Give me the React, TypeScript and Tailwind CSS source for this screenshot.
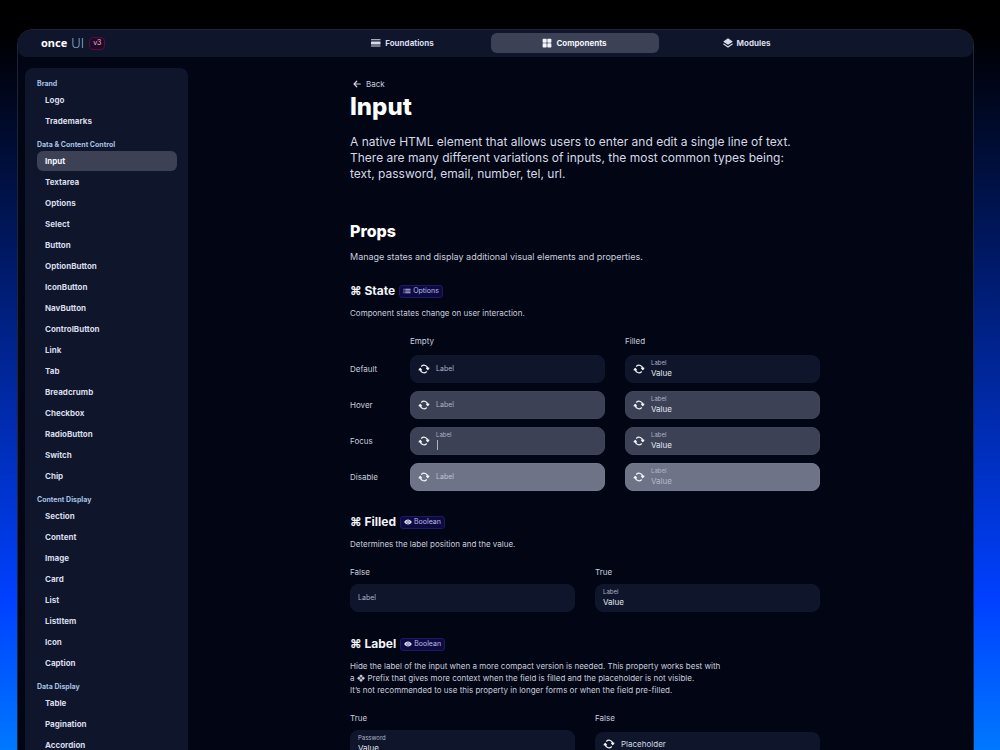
import React from "react";
import { IoEye, IoGrid } from "react-icons/io5";

const groups = [
    { title: "Brand", items: ["Logo", "Trademarks"] },
    {
        title: "Data & Content Control",
        items: [
            "Input", "Textarea", "Options", "Select", "Button", "OptionButton", "IconButton", "NavButton",
            "ControlButton", "Link", "Tab", "Breadcrumb", "Checkbox", "RadioButton", "Switch", "Chip",
        ],
    },
    { title: "Content Display", items: ["Section", "Content", "Image", "Card", "List", "ListItem", "Icon", "Caption"] },
    { title: "Data Display", items: ["Table", "Pagination", "Accordion"] },
];

const states = [
    { name: "Default", style: "bg-[#0f152a] border-[#10172d]", text: "" },
    { name: "Hover", style: "bg-[#3c4156] border-[#40455a]", text: "" },
    { name: "Focus", style: "bg-[#3c4156] border-[#40455a]", text: "" },
    { name: "Disable", style: "bg-[#6e7388] border-[#73788d]", text: "text-[#b4b8c8]" },
];

function RowsIcon() {
    return (
        <svg viewBox="0 0 20 16" className="h-2 w-2.5" fill="currentColor" aria-hidden="true">
            <rect x="0" y="0.5" width="19" height="2" rx="0.5" />
            <rect x="0" y="4.8" width="19" height="6.2" rx="0.5" />
            <rect x="0" y="13.2" width="19" height="2" rx="0.5" />
        </svg>
    );
}

function LayersIcon() {
    return (
        <svg viewBox="0 0 20 20" className="size-2.5" fill="currentColor" aria-hidden="true">
            <path d="M10 0.5 L18.6 6.4 Q19.6 7.1 18.6 7.8 L10.9 13 Q10 13.6 9.1 13 L1.4 7.8 Q0.4 7.1 1.4 6.4 Z" />
            <path d="M1.4 12 L10 18 L18.6 12" fill="none" stroke="currentColor" strokeWidth="2.2" strokeLinecap="round" strokeLinejoin="round" />
        </svg>
    );
}

function SyncIcon() {
    return (
        <svg viewBox="0 0 24 24" className="size-3 shrink-0 text-[#f3f5fb]" fill="none" stroke="currentColor" strokeWidth="2.4" strokeLinecap="round" strokeLinejoin="round" aria-hidden="true">
            <path d="M7 6.4 A7.5 7.5 0 0 1 19.5 11" />
            <path d="M17 17.6 A7.5 7.5 0 0 1 4.5 13" />
            <path d="M17.2 10.2 H21.8 L19.5 13 Z" fill="currentColor" />
            <path d="M2.2 13.8 H6.8 L4.5 11 Z" fill="currentColor" />
        </svg>
    );
}

function ListIcon() {
    return (
        <svg viewBox="0 0 16 12" className="h-1.5 w-2" fill="currentColor" aria-hidden="true">
            <path d="M1 1.5h2v2H1zM1 5h2v2H1zM1 8.5h2v2H1zM4.5 1.5H15v2H4.5zM4.5 5H15v2H4.5zM4.5 8.5H15v2H4.5z" />
        </svg>
    );
}

function Field({ id, label, value, icon, focus, disabled, style, text }: any) {
    const small = value || focus;
    return (
        <div className={"flex h-7 items-center gap-1.5 rounded-lg border px-[7px] " + (style || "border-[#10172d] bg-[#0f152a]")}>
            {icon && <SyncIcon />}
            {
                small
                ?
                <div className="flex min-w-0 flex-1 flex-col">
                    <label htmlFor={id} className={"text-[6px] leading-2 " + (text || "text-[#aeb4c8]")}>{label}</label>
                    <div className="flex h-3 items-center">
                        {focus && <span className="ml-px h-2.5 w-px bg-[#aeb4c8]" />}
                        <input id={id} defaultValue={value} disabled={disabled} className={"w-full min-w-0 bg-transparent text-[8px] leading-3 outline-none " + (text || "text-[#e0e4ef]")} />
                    </div>
                </div>
                :
                <input id={id} aria-label={label} placeholder={label} disabled={disabled} className={"w-full min-w-0 bg-transparent text-[7px] leading-3 outline-none " + (text ? "placeholder:text-[#c0c4d2]" : "placeholder:text-[#aeb4c8]")} />
            }
        </div>
    );
}

function PropTitle({ name, type }: any) {
    return (
        <div className="flex h-4 items-center gap-1">
            <h3 className="text-xs font-bold leading-4 text-[#f3f5fb]">⌘ {name}</h3>
            <span className="flex h-[13px] items-center gap-0.5 rounded-[3px] border border-[#1d1a62] bg-[#0d0a41] px-[3px] text-[7px] text-[#b9bde2]">
                {type === "Options" ? <ListIcon /> : <IoEye className="size-2 text-[#e0e2f5]" />}
                {type}
            </span>
        </div>
    );
}

export default function App() {
    return (
        <div className="h-screen overflow-hidden bg-[linear-gradient(180deg,#000000_0%,#000003_5%,#0040ff_80%,#0078ff_100%)] pt-[29px] pr-[26px] pl-[17px] font-['Inter',sans-serif] text-[#c9cede]">
            <div className="min-h-full rounded-t-2xl border border-b-0 border-[#1e2336] bg-[#020513]">
                <header className="flex items-center rounded-t-[15px] rounded-b-lg bg-[#0f152a] px-2 pt-[3px] pb-1">
                    <a href="#" className="flex w-[158px] items-center gap-1 pl-[15px]">
                        <span className="font-['Noto_Sans',sans-serif] text-[11px] font-bold leading-4 text-white">once</span>
                        <span className="font-['Lato',sans-serif] text-[13px] font-light leading-4 text-[#a9c8ea]">UI</span>
                        <span className="ml-px flex h-[13px] items-center rounded border border-[#4d1245] bg-[#250825] px-[3px] text-[7px] text-[#e0bfe0]">v3</span>
                    </a>
                    <nav className="flex flex-1 justify-center gap-1 text-[8px] font-bold text-[#d8dcea]">
                        <a href="#" className="flex h-5 w-[168px] items-center justify-center gap-1"><RowsIcon />Foundations</a>
                        <a href="#" className="flex h-5 w-[168px] items-center justify-center gap-1 rounded-md bg-[#3c4156] text-[#f3f5fb]"><IoGrid className="size-2.5" />Components</a>
                        <a href="#" className="flex h-5 w-[168px] items-center justify-center gap-1"><LayersIcon />Modules</a>
                    </nav>
                </header>

                <div className="flex gap-[9px] pt-[11px] pl-[7px]">
                    <aside className="w-[163px] shrink-0 rounded-t-lg bg-[#0f152a] pt-2.5 pr-[11px] pl-3">
                        <nav className="flex flex-col gap-2">
                            {groups.map((group) => (
                                <div key={group.title}>
                                    <h2 className="text-[7px] font-bold leading-3 text-[#a5c3e6]">{group.title}</h2>
                                    <ul className="flex flex-col gap-px">
                                        {group.items.map((item) => (
                                            <li key={item}>
                                                <a href="#" className={"block h-5 rounded-md px-2 text-[8px] font-bold leading-5 " + (item === "Input" ? "bg-[#3c4156] text-[#f3f5fb]" : "text-[#d8dcea]")}>{item}</a>
                                            </li>
                                        ))}
                                    </ul>
                                </div>
                            ))}
                        </nav>
                    </aside>

                    <main className="min-w-0 flex-1 pt-2.5">
                        <div className="mx-auto max-w-[470px] text-[8px] leading-3">
                            <a href="#" className="flex items-center gap-[5px] pl-[3px]">
                                <svg viewBox="0 0 16 16" className="size-2" fill="none" stroke="currentColor" strokeWidth="2.4" strokeLinecap="round" strokeLinejoin="round" aria-hidden="true">
                                    <path d="M14.5 8H2M7.5 2.5L2 8L7.5 13.5" />
                                </svg>
                                Back
                            </a>
                            <h1 className="mt-[3px] text-2xl font-extrabold leading-7 text-white">Input</h1>
                            <p className="mt-[13px] text-xs leading-4 text-[#d5d9e6]">
                                A native HTML element that allows users to enter and edit a single line of text.<br />
                                There are many different variations of inputs, the most common types being:<br />
                                text, password, email, number, tel, url.
                            </p>

                            <h2 className="mt-[39px] text-base font-extrabold leading-5 text-white">Props</h2>
                            <p className="mt-2.5 text-[9px]">Manage states and display additional visual elements and properties.</p>

                            <section className="mt-5">
                                <PropTitle name="State" type="Options" />
                                <p className="mt-2">Component states change on user interaction.</p>
                                <div className="mt-4 grid grid-cols-[40px_1fr_1fr] gap-x-5">
                                    <span />
                                    <span>Empty</span>
                                    <span>Filled</span>
                                </div>
                                <div className="mt-2 flex flex-col gap-2">
                                    {states.map((s) => (
                                        <div key={s.name} className="grid grid-cols-[40px_1fr_1fr] items-center gap-x-5">
                                            <span>{s.name}</span>
                                            <Field id={s.name + "-empty"} label="Label" icon focus={s.name === "Focus"} disabled={s.name === "Disable"} style={s.style} text={s.text} />
                                            <Field id={s.name + "-filled"} label="Label" value="Value" icon disabled={s.name === "Disable"} style={s.style} text={s.text} />
                                        </div>
                                    ))}
                                </div>
                            </section>

                            <section className="mt-[23px]">
                                <PropTitle name="Filled" type="Boolean" />
                                <p className="mt-2">Determines the label position and the value.</p>
                                <div className="mt-4 grid grid-cols-2 gap-x-5 gap-y-1.5">
                                    <span>False</span>
                                    <span>True</span>
                                    <Field id="filled-false" label="Label" />
                                    <Field id="filled-true" label="Label" value="Value" />
                                </div>
                            </section>

                            <section className="mt-6">
                                <PropTitle name="Label" type="Boolean" />
                                <p className="mt-2">
                                    Hide the label of the input when a more compact version is needed. This property works best with<br />
                                    a ❖ Prefix that gives more context when the field is filled and the placeholder is not visible.<br />
                                    It’s not recommended to use this property in longer forms or when the field pre-filled.
                                </p>
                                <div className="mt-4 grid grid-cols-2 items-center gap-x-5 gap-y-1.5">
                                    <span>True</span>
                                    <span>False</span>
                                    <Field id="label-true" label="Password" value="Value" />
                                    <div className="flex h-6 items-center gap-1.5 rounded-lg bg-[#0f152a] px-2">
                                        <SyncIcon />
                                        <input aria-label="Placeholder" placeholder="Placeholder" className="w-full min-w-0 bg-transparent text-[8px] outline-none placeholder:text-[#d5d9e6]" />
                                    </div>
                                </div>
                            </section>
                        </div>
                    </main>
                </div>
            </div>
        </div>
    );
}
